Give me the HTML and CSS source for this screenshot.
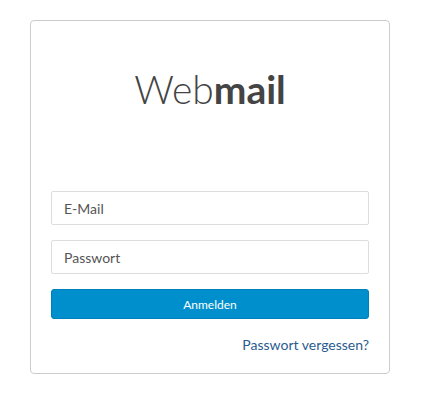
FILE: index.html
```html
<!DOCTYPE html>
<html lang="de">
<head>
    <meta charset="UTF-8" />
    <title>Webmail</title>
    <link rel="stylesheet" href="styles.css">
</head>
<body>
    <div class="login-box">
        <h1 class="brand">Web<b>mail</b></h1>
        <form class="login-form" action="/login" method="POST">
            <input type="text" name="email" class="field" placeholder="E-Mail" />
            <input type="password" name="password" class="field" placeholder="Passwort" />
            <button type="submit" class="login-button">Anmelden</button>
            <div class="forgot">
                <a href="#">Passwort vergessen?</a>
            </div>
        </form>
    </div>
</body>
</html>
```

FILE: styles.css
```css
body {
    margin: 0;
    padding: 20px 0 0 30px;
    background: #fff;
    font-family: Lato, "Open Sans", sans-serif;
}
.login-box {
    width: 360px;
    padding: 20px;
    box-sizing: border-box;
    border: 1px solid #ccc;
    border-radius: 4px;
}
.brand {
    margin: 28px 0 0;
    font-size: 39px;
    line-height: 40px;
    font-weight: 300;
    color: #444;
    text-align: center;
}
.brand b {
    font-weight: 700;
}
.login-form {
    display: flex;
    flex-direction: column;
    gap: 15px;
    margin-top: 82px;
}
.field {
    height: 34px;
    padding: 0 12px;
    box-sizing: border-box;
    border: 1px solid #ddd;
    border-radius: 2px;
    font-family: inherit;
    font-size: 14px;
    color: #555;
    outline: none;
}
.field::placeholder {
    color: #555;
}
.login-button {
    height: 30px;
    border: 1px solid #0080bb;
    border-radius: 3px;
    background: #008fcd;
    color: #fff;
    font-family: inherit;
    font-size: 12px;
}
.forgot {
    text-align: right;
    margin-top: 0;
}
.forgot a {
    color: #2a5c8f;
    font-size: 14px;
    text-decoration: none;
}
```
